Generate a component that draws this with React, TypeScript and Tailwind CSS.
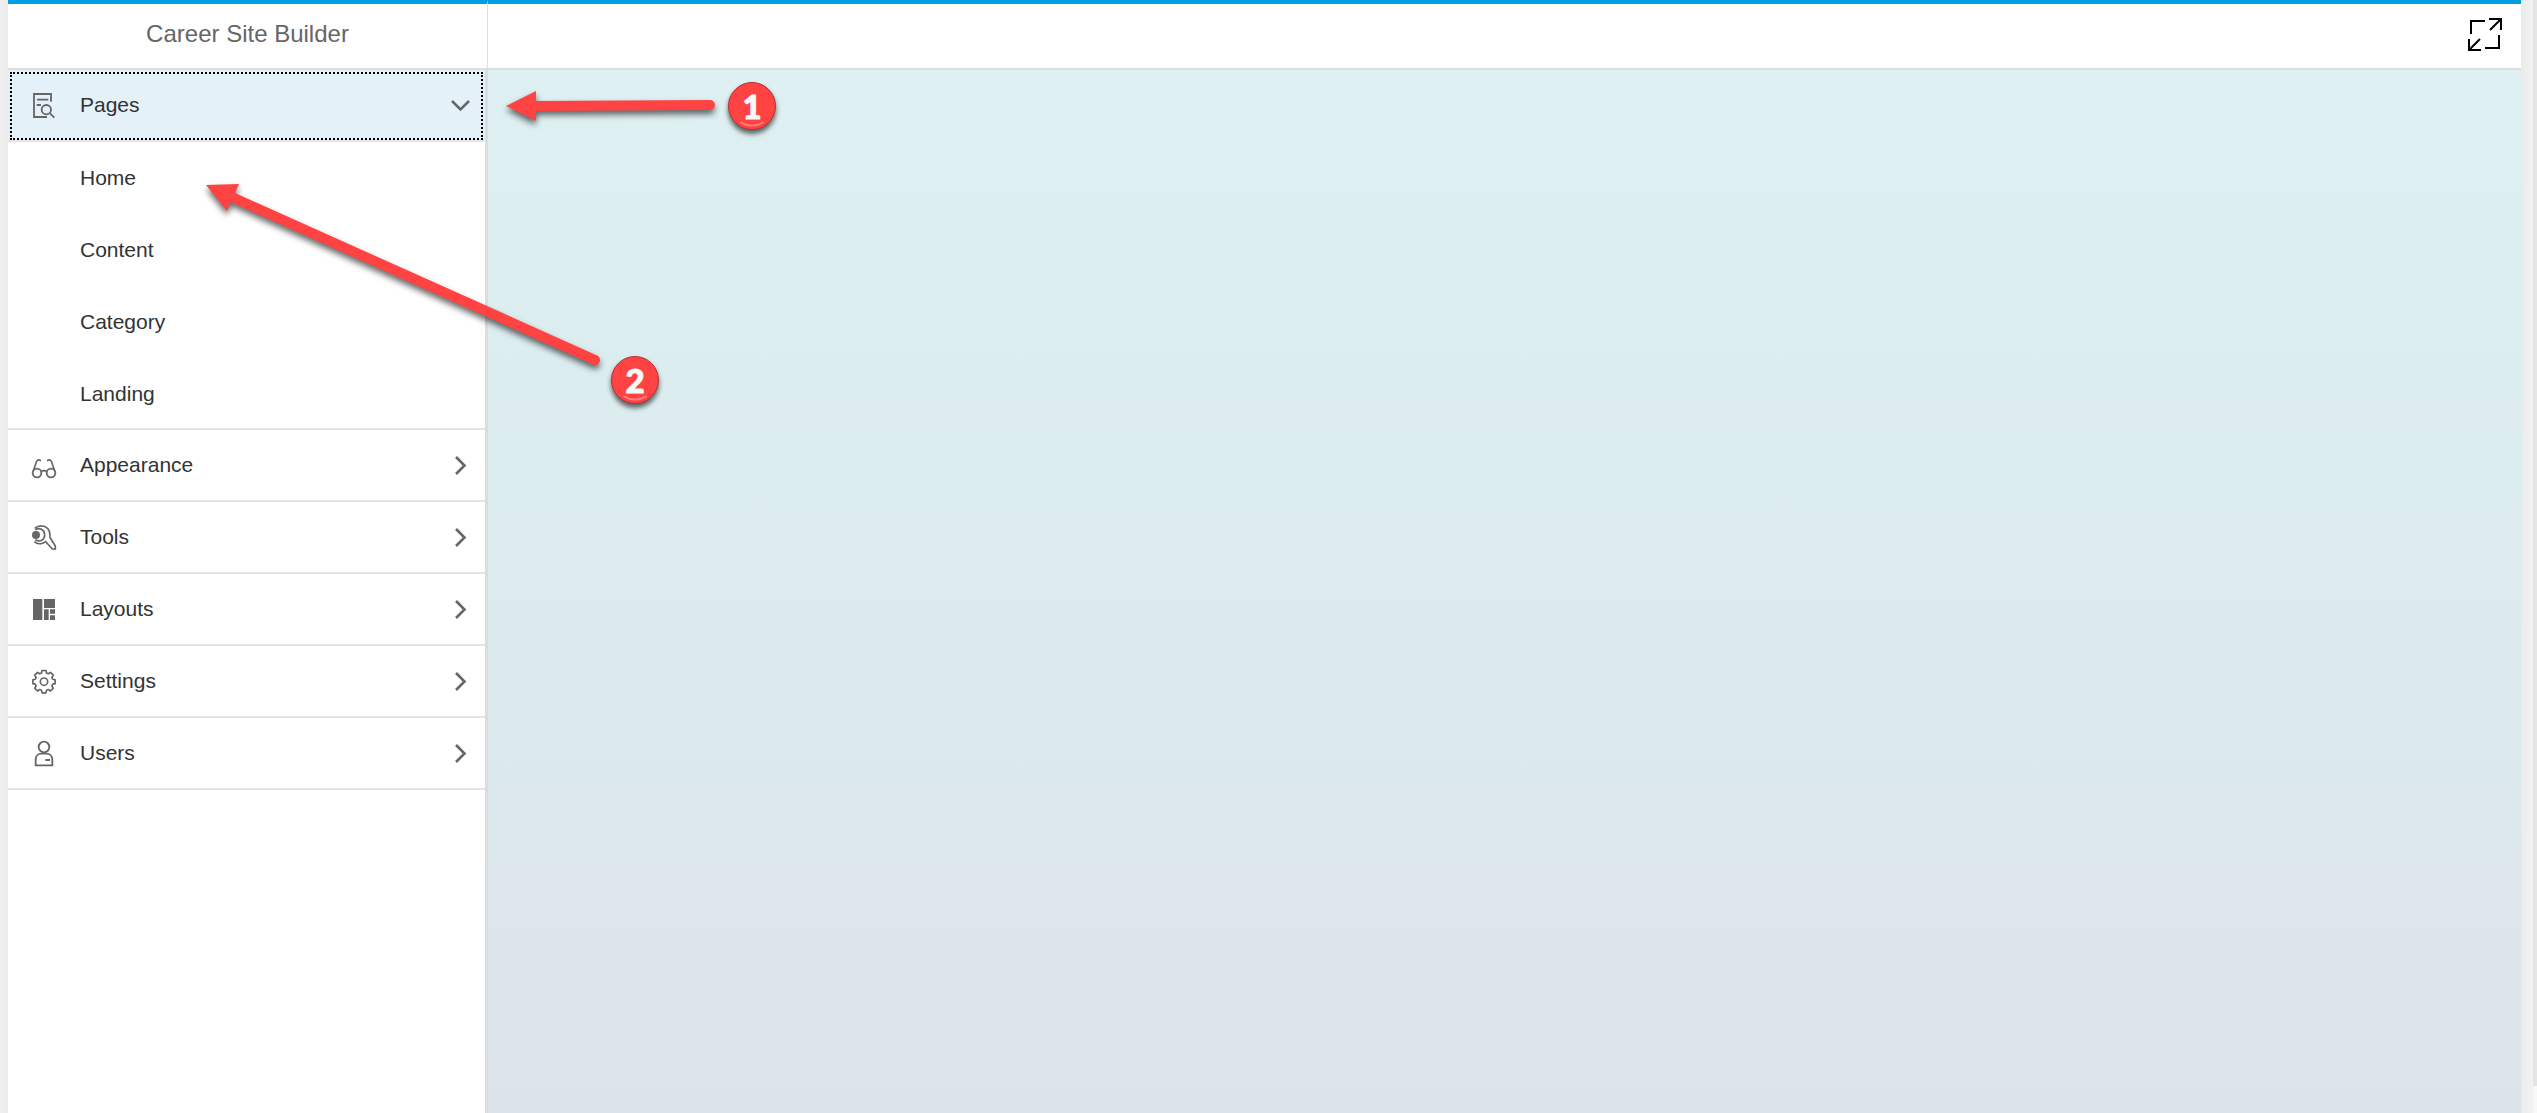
import { useState } from "react";
import type { ReactNode } from "react";

const gearPoints = Array.from({ length: 8 }, (_, i) => {
  const at = (deg: number, r: number) => {
    const a = ((i * 45 + deg) * Math.PI) / 180;
    return `${(36 + r * Math.sin(a)).toFixed(1)},${(38 + r * -Math.cos(a)).toFixed(1)}`;
  };
  return [at(-16, 27), at(-10, 34), at(10, 34), at(16, 27)].join(" ");
}).join(" ");

function Icon({ children }: { children: ReactNode }) {
  return (
    <svg
      viewBox="0 0 72 72"
      className="size-6 shrink-0 overflow-visible text-[#666666]"
      fill="none"
      stroke="currentColor"
      strokeWidth="5.5"
      aria-hidden="true"
    >
      {children}
    </svg>
  );
}

const icons: Record<string, ReactNode> = {
  Pages: (
    <Icon>
      <path d="M57 26V3H6V72H45M15 20H49M14 36H27M54 61L67 74" />
      <circle cx="43" cy="50" r="14" />
    </Icon>
  ),
  Appearance: (
    <Icon>
      <circle cx="15" cy="60" r="13" />
      <circle cx="57" cy="60" r="13" />
      <path d="M28 55Q36 51 44 55M4 53L14 25Q18 18 27 23M68 53L58 25Q54 18 45 23" strokeWidth="5" />
    </Icon>
  ),
  Tools: (
    <Icon>
      <circle cx="12" cy="30" r="12" fill="currentColor" stroke="none" />
      <path d="M8 10C20 0 40 0 49 13C56 23 53 33 54 37L70 63V72H61L41 50C30 59 15 58 7 50" strokeWidth="5" />
      <path d="M10 14C22 7 37 13 38 29C38 45 24 52 10 44" strokeWidth="5" />
    </Icon>
  ),
  Layouts: (
    <Icon>
      <path
        d="M3 6H31V69H3ZM36 6H69V33H36ZM36 37H50V69H36ZM54 37H69V50H54ZM54 55H69V69H54Z"
        fill="currentColor"
        stroke="none"
      />
    </Icon>
  ),
  Settings: (
    <Icon>
      <polygon points={gearPoints} strokeLinejoin="round" strokeWidth="5" />
      <circle cx="36" cy="38" r="11" strokeWidth="5" />
    </Icon>
  ),
  Users: (
    <Icon>
      <circle cx="36" cy="18" r="16" />
      <path d="M11 73V57C11 44 20 38 28 38H44C52 38 61 44 61 57V73Z" />
      <path d="M40 57H54" strokeWidth="6" />
    </Icon>
  ),
};

const sections = [
  { name: "Pages", items: ["Home", "Content", "Category", "Landing"] },
  { name: "Appearance", items: [] },
  { name: "Tools", items: [] },
  { name: "Layouts", items: [] },
  { name: "Settings", items: [] },
  { name: "Users", items: [] },
];

function Chevron({ open }: { open: boolean }) {
  return (
    <svg
      viewBox="0 0 20 20"
      className="ml-auto size-5 shrink-0 text-[#666666]"
      fill="none"
      stroke="currentColor"
      strokeWidth="2.6"
      aria-hidden="true"
    >
      <path d={open ? "M1 6L9.5 14.5L18 6" : "M5 2L13.5 10.5L5 19"} />
    </svg>
  );
}

function Sidebar() {
  const [openName, setOpenName] = useState("Pages");
  return (
    <nav className="w-[480px] shrink-0 border-r-3 border-[#dddddd] bg-white text-[21px] text-[#333333]">
      {sections.map(({ name, items }) => {
        const open = openName === name;
        return (
          <section key={name}>
            <button
              type="button"
              aria-expanded={open}
              onClick={() => setOpenName(open ? "" : name)}
              className={
                open
                  ? "flex h-18 w-full items-center gap-6 border-b-2 border-[#e5e5e5] bg-[#e4f1f9] pr-3.5 pl-6 text-left outline-2 -outline-offset-4 outline-black outline-dotted"
                  : "flex h-18 w-full items-center gap-6 border-b-2 border-[#e5e5e5] pr-3.5 pl-6 text-left"
              }
            >
              {icons[name]}
              {name}
              <Chevron open={open} />
            </button>
            {open && items.length > 0 && (
              <ul className="border-b-2 border-[#e5e5e5]">
                {items.map((item) => (
                  <li key={item} className="last:-mb-0.5">
                    <a href="#" className="flex h-18 items-center pl-18">
                      {item}
                    </a>
                  </li>
                ))}
              </ul>
            )}
          </section>
        );
      })}
    </nav>
  );
}

function Badge({ className, children }: { className: string; children: ReactNode }) {
  return (
    <div
      className={`absolute flex size-12 items-center justify-center rounded-full border border-[#b83038] bg-[#ff4343] font-[Lato,sans-serif] text-[33px] leading-none font-black text-[#f8f8f8] shadow-[0_4px_5px_rgba(0,0,0,0.6)] [-webkit-text-stroke:1px_#f8f8f8] ${className}`}
    >
      {children}
      <svg viewBox="0 0 48 48" className="absolute inset-0" fill="none" stroke="#ff8080" strokeWidth="2" aria-hidden="true">
        <path d="M12 41Q24 48 36 41" />
      </svg>
    </div>
  );
}

function Callouts() {
  return (
    <div className="pointer-events-none absolute top-0 left-0">
      <svg
        width="800"
        height="440"
        className="drop-shadow-[0_4px_3px_rgba(0,0,0,0.6)]"
        fill="#ff4343"
        stroke="#ff4343"
        aria-hidden="true"
      >
        <path d="M506 106L536 91V121Z" stroke="none" />
        <path d="M534 106L710 105" strokeWidth="10" strokeLinecap="round" />
        <path d="M206 185L239 184L227 211Z" stroke="none" />
        <path d="M234 198L595 360" strokeWidth="10" strokeLinecap="round" />
      </svg>
      <Badge className="top-[82px] left-[728px]">1</Badge>
      <Badge className="top-[356px] left-[611px]">2</Badge>
    </div>
  );
}

export default function App() {
  return (
    <div className="relative flex min-h-screen bg-[#efefef] font-['Liberation_Sans',Arial,sans-serif]">
      <div className="w-2 bg-linear-to-r from-[#f0f0f0] to-[#ebebeb]" />
      <div className="flex min-w-0 flex-1 flex-col">
        <header className="flex h-[70px] shrink-0 border-b-2 border-[#dddddd] bg-white">
          <div className="flex w-[480px] shrink-0 items-center justify-center border-t-4 border-r border-t-[#009de0] border-r-[#dddddd] pb-1">
            <h1 className="text-2xl text-[#666666]">Career Site Builder</h1>
          </div>
          <div className="flex flex-1 items-center justify-end border-t-4 border-[#009de0] pr-[19px] pb-0.5">
            <button type="button" aria-label="Toggle full screen">
              <svg
                width="34"
                height="34"
                viewBox="0 0 34 34"
                className="block"
                fill="none"
                stroke="black"
                strokeWidth="2"
                aria-hidden="true"
              >
                <path d="M21 1H33V12M33 1L22 12M1 21V32H13M1 32L12 21M3 16V3H17M31 17V30H17" />
              </svg>
            </button>
          </div>
        </header>
        <div className="flex flex-1">
          <Sidebar />
          <main className="flex-1 bg-linear-to-b from-[#def0f2] via-[#dbebee] to-[#dde3eb]" />
        </div>
      </div>
      <div className="w-3 bg-linear-to-r from-[#ebebeb] to-[#f2f2f2]" />
      <div className="flex w-1 flex-col bg-[#f8f8f8] pb-[27px]">
        <div className="flex-1 bg-[#e4e4e4]" />
      </div>
      <Callouts />
    </div>
  );
}
